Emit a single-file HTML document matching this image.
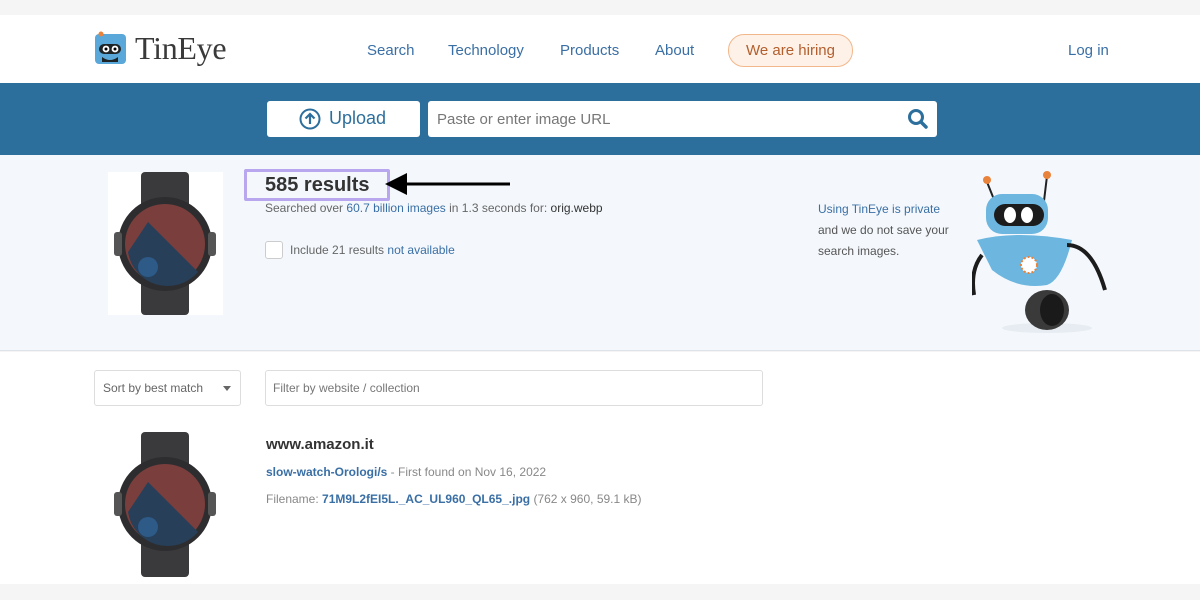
<!DOCTYPE html>
<html><head><meta charset="utf-8"><style>
*{margin:0;padding:0;box-sizing:border-box}
body{width:1200px;height:600px;background:#f5f5f5;font-family:"Liberation Sans",sans-serif;position:relative;overflow:hidden}
.a{position:absolute}
.blue{color:#3a6fa5}
</style></head><body>
<div class="a" style="left:0;top:15px;width:1200px;height:68px;background:#fff"></div>
<svg class="a" style="left:94px;top:31px" width="34" height="34" viewBox="0 0 34 34"><rect x="1" y="3" width="31" height="30" rx="4" fill="#5aa7d9"/><rect x="5" y="13" width="22" height="10" rx="5" fill="#1e2326"/><circle cx="12" cy="18" r="3.4" fill="#fff"/><circle cx="21" cy="18" r="3.4" fill="#fff"/><circle cx="12" cy="18" r="1.5" fill="#000"/><circle cx="21" cy="18" r="1.5" fill="#000"/><path d="M8 26q8 6 16 0v5H8z" fill="#1e2326"/><circle cx="7" cy="3" r="2.5" fill="#e9823a"/></svg>
<div class="a" style="left:135px;top:30px;font:32px 'Liberation Serif',serif;color:#3a3a3a;letter-spacing:-0.3px">TinEye</div>
<div class="a blue" style="left:367px;top:42px;font-size:15px">Search</div>
<div class="a blue" style="left:448px;top:42px;font-size:15px">Technology</div>
<div class="a blue" style="left:560px;top:42px;font-size:15px">Products</div>
<div class="a blue" style="left:655px;top:42px;font-size:15px">About</div>
<div class="a" style="left:728px;top:34px;width:125px;height:33px;border:1px solid #f3b78c;background:#fdf1e8;border-radius:16px;color:#b35e2d;font-size:15px;text-align:center;line-height:31px">We are hiring</div>
<div class="a blue" style="left:1068px;top:42px;font-size:15px">Log in</div>
<div class="a" style="left:0;top:83px;width:1200px;height:72px;background:#2d6f9c"></div>
<div class="a" style="left:267px;top:101px;width:153px;height:36px;background:#fff;border-radius:3px"></div>
<svg class="a" style="left:299px;top:108px" width="22" height="22" viewBox="0 0 22 22"><circle cx="11" cy="11" r="9.5" fill="none" stroke="#2d6f9c" stroke-width="2"/><path d="M11 16V6M6.5 10.5L11 6l4.5 4.5" fill="none" stroke="#2d6f9c" stroke-width="2.2"/></svg>
<div class="a" style="left:329px;top:108px;font-size:18px;color:#2d6f9c">Upload</div>
<div class="a" style="left:428px;top:101px;width:509px;height:36px;background:#fff;border-radius:3px"></div>
<div class="a" style="left:437px;top:111px;font-size:15px;color:#777">Paste or enter image URL</div>
<svg class="a" style="left:906px;top:107px" width="24" height="24" viewBox="0 0 24 24"><circle cx="10" cy="10" r="6.5" fill="none" stroke="#2d6f9c" stroke-width="3"/><path d="M15 15l5 5" stroke="#2d6f9c" stroke-width="3.5" stroke-linecap="round"/></svg>
<div class="a" style="left:0;top:155px;width:1200px;height:196px;background:#f4f8fc;border-bottom:1px solid #dde3e8"></div>
<div class="a" style="left:108px;top:172px;width:115px;height:143px;background:#fff"></div>
<svg class="a" style="left:108px;top:172px" width="115" height="143" viewBox="0 0 115 143"><rect x="33" y="0" width="48" height="143" rx="4" fill="#3a3a3c"/><circle cx="57" cy="72" r="47" fill="#2d2d30"/><circle cx="57" cy="72" r="40" fill="#7a3f3c"/><path d="M20 80a40 40 0 0 0 70 20L40 50z" fill="#273f58"/><circle cx="40" cy="95" r="10" fill="#2e5a88"/><rect x="6" y="60" width="8" height="24" rx="3" fill="#555"/><rect x="100" y="60" width="8" height="24" rx="3" fill="#555"/></svg>
<div class="a" style="left:244px;top:169px;width:146px;height:32px;border:3px solid #b8a6ee;border-radius:2px"></div>
<div class="a" style="left:265px;top:174px;font-size:20px;font-weight:bold;color:#333">585 results</div>
<svg class="a" style="left:383px;top:170px" width="130" height="30" viewBox="0 0 130 30"><path d="M20 14H127" stroke="#000" stroke-width="3"/><path d="M2 14L24 3v22z" fill="#000"/></svg>
<div class="a" style="left:265px;top:201px;font-size:12px;color:#666">Searched over <span class="blue">60.7 billion images</span> in 1.3 seconds for: <span style="color:#333">orig.webp</span></div>
<div class="a" style="left:265px;top:241px;width:18px;height:18px;border:1px solid #ccc;border-radius:3px;background:#fff"></div>
<div class="a" style="left:290px;top:243px;font-size:12px;color:#666">Include 21 results <span class="blue">not available</span></div>
<div class="a" style="left:818px;top:199px;font-size:12px;line-height:21px;color:#555"><span class="blue">Using TinEye is private</span><br>and we do not save your<br>search images.</div>
<svg class="a" style="left:972px;top:170px" width="140" height="165" viewBox="0 0 140 165"><ellipse cx="75" cy="158" rx="45" ry="5" fill="#e6ecf1"/><path d="M15 12l8 20M75 6l-3 25" stroke="#222" stroke-width="2"/><circle cx="15" cy="10" r="4" fill="#e9823a"/><circle cx="75" cy="5" r="4" fill="#e9823a"/><rect x="14" y="24" width="62" height="40" rx="16" fill="#6cb6e0"/><rect x="22" y="34" width="50" height="22" rx="11" fill="#1c1c1c"/><ellipse cx="38" cy="45" rx="6" ry="8" fill="#fff"/><ellipse cx="55" cy="45" rx="6" ry="8" fill="#fff"/><path d="M5 70q40-10 95 0q-10 40-25 45q-30 5-55-15z" fill="#6cb6e0"/><circle cx="57" cy="95" r="8" fill="#fff" stroke="#e9823a" stroke-width="2" stroke-dasharray="2 2"/><path d="M10 85q-12 15-8 40M95 75q25 0 38 45" stroke="#1c1c1c" stroke-width="4" fill="none"/><ellipse cx="75" cy="140" rx="22" ry="20" fill="#3a3a3a"/><ellipse cx="80" cy="140" rx="12" ry="16" fill="#1a1a1a"/></svg>
<div class="a" style="left:0;top:352px;width:1200px;height:232px;background:#fff"></div>
<div class="a" style="left:94px;top:370px;width:147px;height:36px;border:1px solid #ddd;border-radius:3px"></div>
<div class="a" style="left:103px;top:381px;font-size:12px;color:#666">Sort by best match</div>
<div class="a" style="left:223px;top:386px;border:4px solid transparent;border-top:5px solid #666"></div>
<div class="a" style="left:265px;top:370px;width:498px;height:36px;border:1px solid #ddd;border-radius:3px"></div>
<div class="a" style="left:273px;top:381px;font-size:12px;color:#777">Filter by website / collection</div>
<svg class="a" style="left:108px;top:432px" width="115" height="145" viewBox="0 0 115 145"><rect x="33" y="0" width="48" height="145" rx="4" fill="#3a3a3c"/><circle cx="57" cy="72" r="47" fill="#2d2d30"/><circle cx="57" cy="72" r="40" fill="#7a3f3c"/><path d="M20 80a40 40 0 0 0 70 20L40 50z" fill="#273f58"/><circle cx="40" cy="95" r="10" fill="#2e5a88"/><rect x="6" y="60" width="8" height="24" rx="3" fill="#555"/><rect x="100" y="60" width="8" height="24" rx="3" fill="#555"/></svg>
<div class="a" style="left:266px;top:436px;font-size:15px;font-weight:bold;color:#333">www.amazon.it</div>
<div class="a" style="left:266px;top:465px;font-size:12px;color:#888"><b class="blue">slow-watch-Orologi/s</b> - First found on Nov 16, 2022</div>
<div class="a" style="left:266px;top:492px;font-size:12px;color:#888">Filename: <b class="blue">71M9L2fEI5L._AC_UL960_QL65_.jpg</b> (762 x 960, 59.1 kB)</div>
</body></html>
